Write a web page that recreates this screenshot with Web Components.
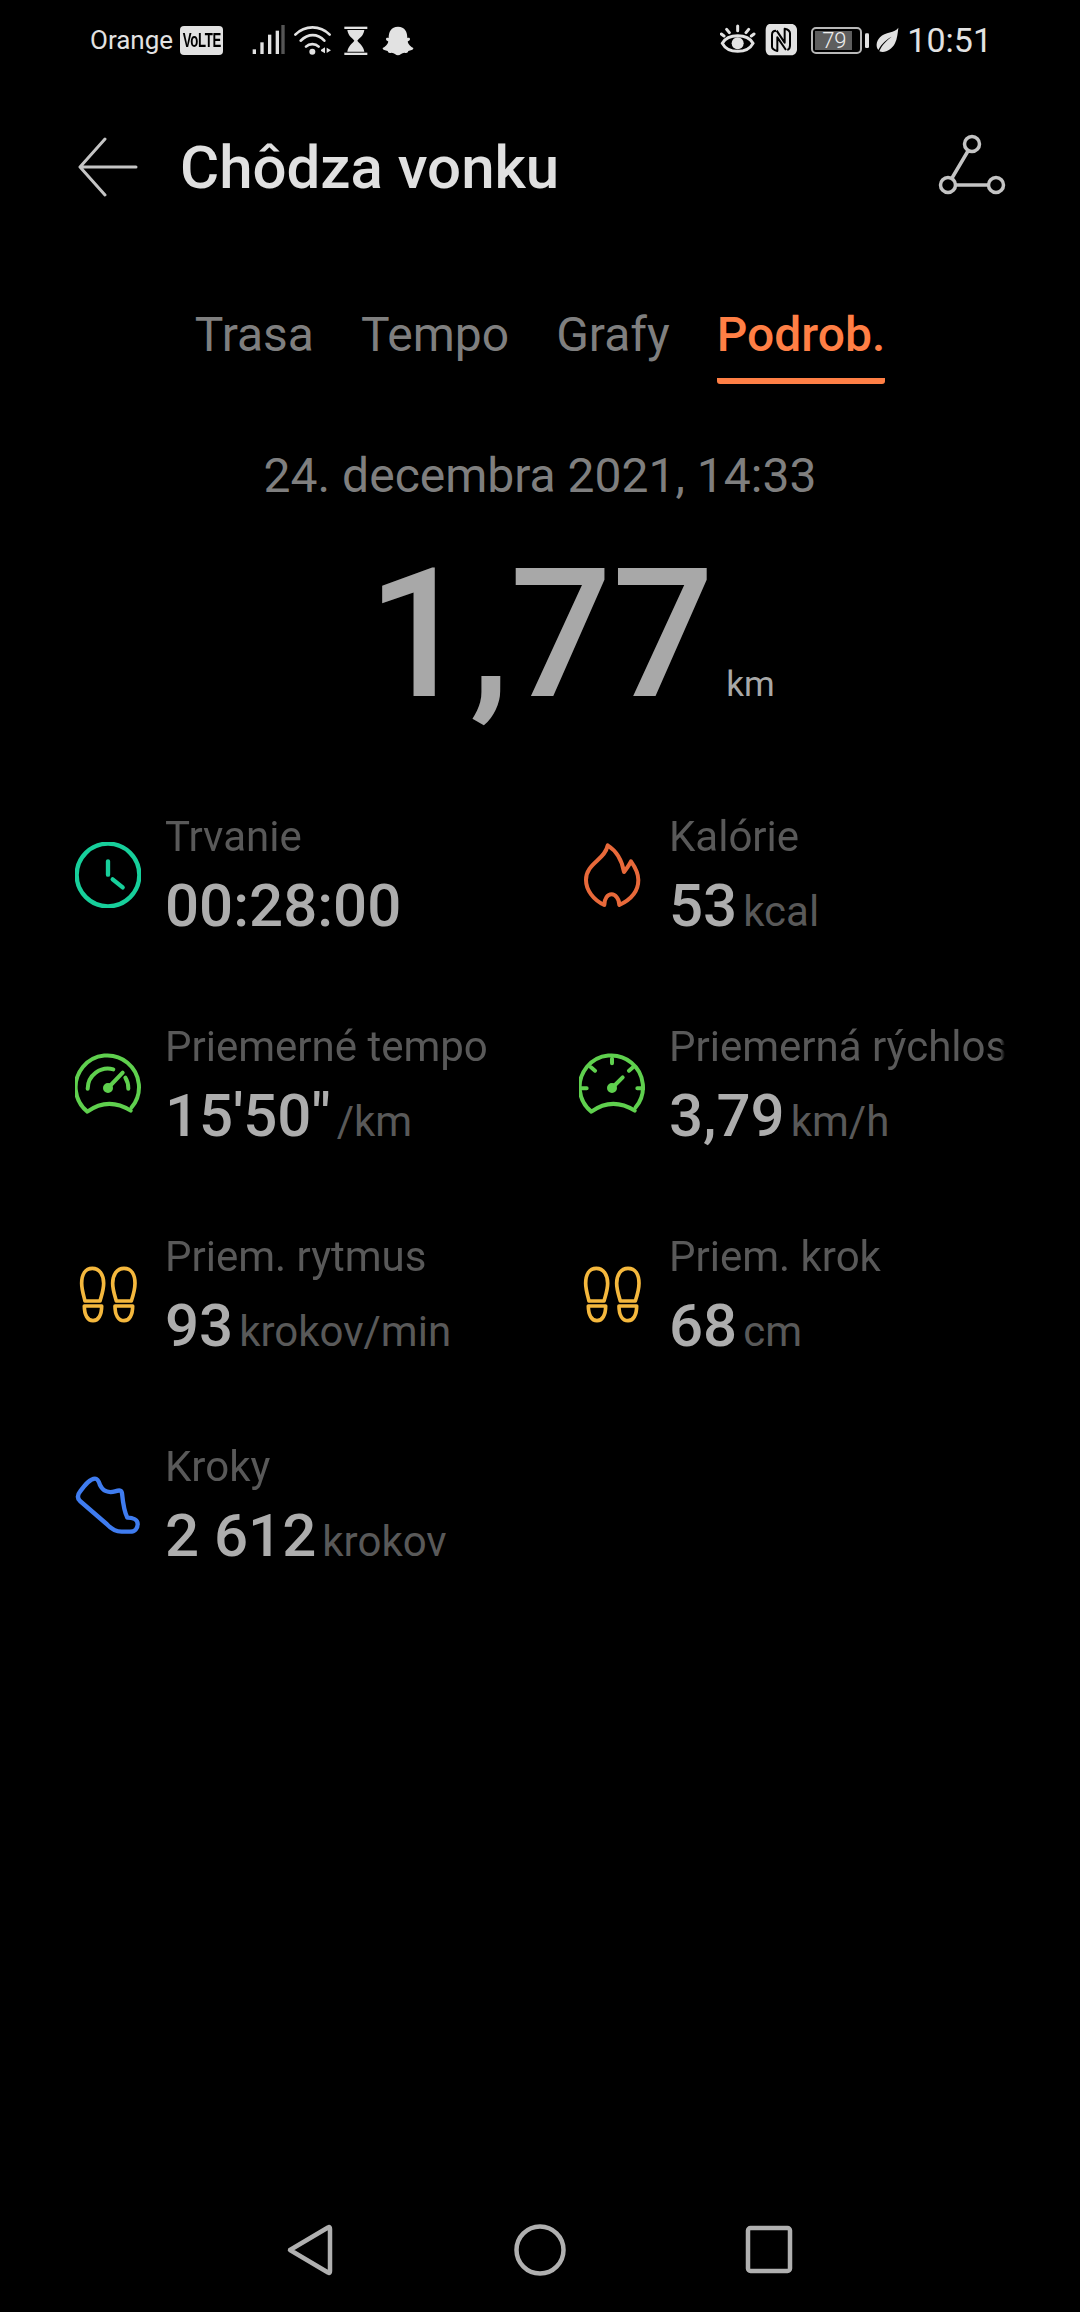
<!DOCTYPE html>
<html lang="sk">
<head>
<meta charset="utf-8">
<title>Chôdza vonku</title>
<style>
  html, body { margin: 0; padding: 0; background: #000; }
  body { width: 1080px; height: 2312px; overflow: hidden; font-family: Roboto, "Liberation Sans", sans-serif; }
  sport-screen { height: 2312px; }
</style>
</head>
<body>
<sport-screen>
  <status-bar></status-bar>
  <app-header>Chôdza vonku</app-header>
  <tab-bar tabs="Trasa,Tempo,Grafy,Podrob." active="3"></tab-bar>
  <distance-hero date="24. decembra 2021, 14:33" value="1,77" unit="km"></distance-hero>
  <stat-grid>
    <stat-item icon="clock" label="Trvanie" value="00:28:00"></stat-item>
    <stat-item icon="flame" label="Kalórie" value="53" unit="kcal"></stat-item>
    <stat-item icon="pace" label="Priemerné tempo" value="15'50&quot;" unit="/km"></stat-item>
    <stat-item icon="speed" label="Priemerná rýchlosť" value="3,79" unit="km/h"></stat-item>
    <stat-item icon="steps" label="Priem. rytmus" value="93" unit="krokov/min"></stat-item>
    <stat-item icon="steps" label="Priem. krok" value="68" unit="cm"></stat-item>
    <stat-item icon="shoe" label="Kroky" value="2 612" unit="krokov"></stat-item>
  </stat-grid>
  <nav-bar></nav-bar>
</sport-screen>

<script>
class SportScreen extends HTMLElement {
    constructor() {
        super();
        this.attachShadow({ mode: "open" }).innerHTML = `
        <style>
        :host { display: flex; flex-direction: column; background: #000; }
        ::slotted(nav-bar) { margin-top: auto; }
        </style>
        <slot></slot>`;
    }
}

class StatusBar extends HTMLElement {
    constructor() {
        super();
        this.attachShadow({ mode: "open" }).innerHTML = `
        <style>
        :host { display: flex; align-items: center; justify-content: space-between; height: 80px; padding: 0 88px 0 90px; color: #e2e2e2; font-family: Roboto, sans-serif; }
        .side { display: flex; align-items: center; }
        .carrier { font-size: 26px; }
        .volte { width: 43px; height: 29px; margin-left: 7px; background: #e2e2e2; color: #000; border-radius: 4px; font: 700 20px "Liberation Sans", sans-serif; display: flex; align-items: center; justify-content: center; overflow: hidden; }
        .volte span { display: inline-block; transform: scaleX(0.66); letter-spacing: -0.5px; }
        svg { display: block; }
        .battery { position: relative; box-sizing: border-box; width: 51px; height: 27px; margin-left: 14px; border: 2px solid #b8b8b8; border-radius: 5px; padding: 2px; }
        .battery i { display: block; width: 37px; height: 100%; background: #5e5e5e; }
        .battery b { position: absolute; inset: 0; display: flex; align-items: center; justify-content: center; font-size: 22px; font-weight: 300; color: #eee; padding-right: 5px; }
        .time { font-size: 34px; margin-left: 2px; }
        </style>
        <div class="side">
            <span class="carrier">Orange</span>
            <span class="volte"><span>VoLTE</span></span>
            <svg style="margin-left:27px" width="165" height="40" viewBox="570 60 495 120">
                <g fill="#e2e2e2">
                    <rect x="578" y="148" width="10" height="14"/>
                    <rect x="601" y="127" width="10" height="35"/>
                    <rect x="624" y="104" width="10" height="58"/>
                    <rect x="647" y="92" width="10" height="70"/>
                    <rect x="664" y="75" width="10" height="87" fill="#555"/>
                    <circle cx="757" cy="155" r="9"/>
                    <path d="M783 149l12-7v18l-12-7zM800 143l13 8-13 8z"/>
                </g>
                <g fill="none" stroke="#e2e2e2" stroke-width="8" stroke-linecap="round">
                    <path d="M706 104C735 75 780 75 809 104"/>
                    <path d="M722 122C745 100 772 100 793 122"/>
                    <path d="M738 140C748 130 766 130 776 140"/>
                </g>
                <g fill="#e2e2e2">
                    <rect x="853" y="80" width="69" height="7"/>
                    <rect x="853" y="158" width="69" height="7"/>
                    <path d="M862 90H913C911 108 897 115 892 122C897 129 911 138 913 155H862C864 138 878 129 883 122C878 115 864 108 862 90Z"/>
                    <path d="M1014 80C993 80 986 96 986 114C982 113 978 113 978 118C978 122 983 123 985 125C983 133 975 141 968 144C968 151 976 151 983 153C985 159 988 160 995 158C1003 158 1007 166 1014 166C1021 166 1025 158 1033 158C1040 160 1043 159 1045 153C1052 151 1060 151 1060 144C1053 141 1045 133 1043 125C1045 123 1050 122 1050 118C1050 113 1046 113 1042 114C1042 96 1035 80 1014 80Z"/>
                </g>
            </svg>
        </div>
        <div class="side">
            <svg width="77" height="40" viewBox="66 60 231 120">
                <g fill="none" stroke="#e2e2e2" stroke-width="9" stroke-linecap="round">
                    <path d="M73 130C90 100 148 100 165 130C148 162 90 162 73 130Z"/>
                    <path d="M119 92V78M94 98L86 88M144 98L152 88M78 108L70 102M160 108L168 102"/>
                </g>
                <circle cx="119" cy="130" r="18" fill="#e2e2e2"/>
                <path fill="#e2e2e2" d="M216 72H280C290 72 297 80 297 90V148C297 158 290 166 280 166H216C208 166 203 158 203 148V90C203 80 208 72 216 72Z"/>
                <path fill="none" stroke="#000" stroke-width="6" stroke-linejoin="round" d="M234 92C224 92 222 98 222 104V140C222 146 228 150 238 153V112L264 150M268 150C274 148 276 142 276 136V100C276 92 270 88 260 86V128L236 92"/>
            </svg>
            <div class="battery"><i></i><b>79</b></div>
            <svg style="margin-left:2px" width="41" height="40" viewBox="497 60 123 120">
                <rect x="500" y="100" width="12" height="44" rx="4" fill="#e2e2e2"/>
                <path fill="#e2e2e2" d="M600 83C590 100 560 95 545 112C532 126 533 142 540 150C550 130 565 118 580 110C565 122 550 135 543 154C560 160 580 150 590 130C597 115 598 100 600 83Z"/>
            </svg>
            <span class="time">10:51</span>
        </div>`;
    }
}

class AppHeader extends HTMLElement {
    constructor() {
        super();
        this.attachShadow({ mode: "open" }).innerHTML = `
        <style>
        :host { display: flex; align-items: center; height: 94px; margin-top: 40px; padding: 0 74px 0 76px; }
        svg { display: block; flex: none; }
        .title { flex: 1; margin-left: 42px; font: 500 60px Roboto, sans-serif; color: #e0e0e0; }
        </style>
        <svg width="62" height="60" viewBox="76 137 62 60">
            <path d="M136 167H81M105 139L80 167L105 195" fill="none" stroke="#c4c4c4" stroke-width="3" stroke-linecap="round" stroke-linejoin="round"/>
        </svg>
        <span class="title"><slot></slot></span>
        <svg width="70" height="70" viewBox="936 132 70 70">
            <g fill="none" stroke="#c4c4c4" stroke-width="3.5">
                <circle cx="972" cy="144" r="7.5"/>
                <circle cx="948" cy="185" r="7.5"/>
                <circle cx="996" cy="185" r="7.5"/>
                <path d="M968 151L952 178M956 185H988"/>
            </g>
        </svg>`;
    }
}

class TabBar extends HTMLElement {
    constructor() {
        super();
        this.attachShadow({ mode: "open" });
    }

    connectedCallback() {
        const active = Number(this.getAttribute("active"));
        const tabs = this.getAttribute("tabs").split(",");
        this.shadowRoot.innerHTML = `
        <style>
        :host { display: flex; justify-content: center; gap: 47px; margin-top: 87px; height: 83px; font: 400 48px Roboto, sans-serif; color: #7f7f7f; }
        .tab { box-sizing: border-box; height: 83px; padding-top: 7px; line-height: 54px; }
        .active { color: #ff7f45; font-weight: 500; border-bottom: 6px solid #ff7f45; border-radius: 0 0 3px 3px; }
        </style>
        ${tabs.map((t, i) => `<div class="tab ${i === active ? "active" : ""}">${t}</div>`).join("")}`;
    }
}

class DistanceHero extends HTMLElement {
    constructor() {
        super();
        this.attachShadow({ mode: "open" });
    }

    connectedCallback() {
        this.shadowRoot.innerHTML = `
        <style>
        :host { display: block; font-family: Roboto, sans-serif; text-align: center; }
        .date { margin-top: 65px; font-size: 48px; line-height: 54px; color: #7f7f7f; }
        .line { display: flex; justify-content: center; align-items: baseline; height: 210px; line-height: 210px; margin-top: 27px; color: #a8a8a8; padding-left: 62px; }
        .value { font-size: 180px; font-weight: 500; }
        .unit { font-size: 35px; margin-left: 12px; }
        </style>
        <div class="date">${this.getAttribute("date")}</div>
        <div class="line"><span class="value">${this.getAttribute("value")}</span><span class="unit">${this.getAttribute("unit")}</span></div>`;
    }
}

class StatGrid extends HTMLElement {
    constructor() {
        super();
        this.attachShadow({ mode: "open" }).innerHTML = `
        <style>
        :host { display: grid; grid-template-columns: 504px 426px; grid-auto-rows: 210px; margin-top: 73px; padding-left: 75px; }
        </style>
        <slot></slot>`;
    }
}

const STAT_ICONS = {
    clock: { color: "#17cf9b", stroke: 13, box: "75 126 198 198", body: `
        <circle cx="174" cy="225" r="94"/>
        <path d="M174 184V224M188 238L218 262"/>` },
    flame: { color: "#e8693a", stroke: 12, box: "57 126 198 198", body: `
        <path d="M143 136C165 150 185 175 192 216C200 205 208 195 213 184C228 205 235 220 235 240C235 275 210 300 178 315C178 295 165 283 155 283C143 283 133 295 133 315C100 300 78 270 78 240C78 190 135 180 143 136Z"/>` },
    pace: { color: "#5fd04e", stroke: 12, box: "75 66 198 198", body: `
        <path d="M245 232A95 95 0 1 0 112 245Q175 200 242 242"/>
        <path d="M113 176A61 61 0 0 1 190 118M226 143A61 61 0 0 1 235 176"/>
        <path d="M174 174L218 128"/>
        <circle cx="174" cy="174" r="9" fill="currentColor"/>` },
    speed: { color: "#5fd04e", stroke: 12, box: "57 66 198 198", body: `
        <path d="M227 232A95 95 0 1 0 94 245Q157 200 224 242"/>
        <path d="M156 86V100M93 112L105 122M219 112L207 122M62 175H80M232 175H250"/>
        <path d="M156 174L188 142"/>
        <circle cx="156" cy="174" r="9" fill="currentColor"/>` },
    steps: { color: "#f5b83d", stroke: 11, box: "75 36 198 198", body: `
        <path d="M127 55C105 55 95 75 95 100C95 120 102 140 105 153H150C155 135 161 120 161 100C161 75 149 55 127 55Z"/>
        <path d="M103 168H155C155 195 145 212 129 212C113 212 103 195 103 168Z"/>
        <path d="M222 55C200 55 188 75 188 100C188 120 194 135 199 153H244C250 135 255 120 255 100C255 75 245 55 222 55Z"/>
        <path d="M195 168H248C248 195 238 212 222 212C205 212 195 195 195 168Z"/>` },
    shoe: { color: "#3f7cf0", stroke: 13, box: "75 66 198 198", body: `
        <path d="M135 86C120 86 105 105 90 125C82 135 82 145 90 153L170 222C182 235 195 245 215 245H240C255 245 263 235 263 222C263 210 250 203 232 203C225 190 220 170 216 130C215 120 208 120 195 124C175 130 158 122 150 105C146 92 142 86 135 86Z"/>` }
};

class StatItem extends HTMLElement {
    constructor() {
        super();
        this.attachShadow({ mode: "open" });
    }

    connectedCallback() {
        const icon = STAT_ICONS[this.getAttribute("icon")];
        const unit = this.getAttribute("unit");
        this.shadowRoot.innerHTML = `
        <style>
        :host { display: flex; min-width: 0; font-family: Roboto, sans-serif; }
        svg { flex: none; width: 66px; height: 66px; margin-top: 29px; margin-right: 24px; color: ${icon.color}; fill: none; stroke: currentColor; stroke-width: ${icon.stroke}; stroke-linecap: round; stroke-linejoin: round; }
        .text { min-width: 0; width: 336px; }
        .label { font-size: 42px; line-height: 48px; height: 48px; color: #595959; white-space: nowrap; overflow: hidden; -webkit-mask-image: linear-gradient(to left, transparent 0, #000 5px); mask-image: linear-gradient(to left, transparent 0, #000 5px); }
        .reading { display: flex; align-items: baseline; line-height: 72px; white-space: nowrap; margin-top: 9px; }
        .value { font-size: 60px; font-weight: 500; color: #adadad; }
        .unit { font-size: 42px; margin-left: 6px; color: #595959; }
        </style>
        <svg viewBox="${icon.box}">${icon.body}</svg>
        <div class="text">
            <div class="label">${this.getAttribute("label")}</div>
            <div class="reading"><span class="value">${this.getAttribute("value")}</span>${unit ? `<span class="unit">${unit}</span>` : ""}</div>
        </div>`;
    }
}

class NavBar extends HTMLElement {
    constructor() {
        super();
        this.attachShadow({ mode: "open" }).innerHTML = `
        <style>
        :host { display: grid; grid-template-columns: repeat(3, 230px); justify-content: center; justify-items: center; align-items: center; height: 124px; padding-bottom: 0; }
        svg { display: block; fill: none; stroke: #b0b0b0; stroke-width: 4.5; stroke-linejoin: round; }
        </style>
        <svg width="60" height="60"><path d="M10 30L48 7.5C49.5 6.5 50 7.5 50 9V51C50 52.5 49.5 53.5 48 52.5Z"/></svg>
        <svg width="60" height="60"><circle cx="30" cy="30" r="23.5"/></svg>
        <svg width="60" height="60"><rect x="8" y="8" width="42" height="43" rx="2.5"/></svg>`;
    }
}

customElements.define("sport-screen", SportScreen);
customElements.define("status-bar", StatusBar);
customElements.define("app-header", AppHeader);
customElements.define("tab-bar", TabBar);
customElements.define("distance-hero", DistanceHero);
customElements.define("stat-grid", StatGrid);
customElements.define("stat-item", StatItem);
customElements.define("nav-bar", NavBar);
</script>
</body>
</html>
